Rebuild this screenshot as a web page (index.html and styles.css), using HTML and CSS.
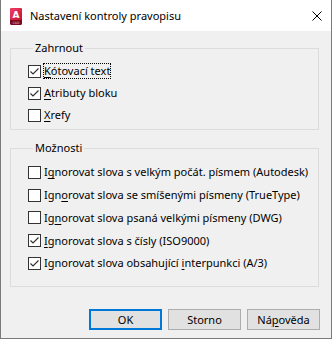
FILE: index.html
```html
<!DOCTYPE html>
<html lang="cs">
<head>
    <meta charset="UTF-8">
    <title>Nastavení kontroly pravopisu</title>
    <link rel="stylesheet" href="styles.css">
</head>
<body>
    <div class="window">
        <div class="titlebar">
            <svg class="app-icon" viewBox="0 0 12 17" width="12" height="17">
                <defs>
                    <linearGradient id="red" x1="0" y1="0" x2="1" y2="1">
                        <stop offset="0" stop-color="#f0406a"/>
                        <stop offset="1" stop-color="#c8102e"/>
                    </linearGradient>
                </defs>
                <rect x="0" y="0" width="12" height="17" rx="1.5" fill="#7a0b22"/>
                <rect x="0" y="0" width="12" height="12" rx="1.5" fill="url(#red)"/>
                <text x="6" y="9.5" text-anchor="middle" class="icon-a">A</text>
                <text x="6" y="15.6" text-anchor="middle" class="icon-cad">CAD</text>
            </svg>
            <span class="title">Nastavení kontroly pravopisu</span>
            <svg class="close" viewBox="0 0 10 10" width="10" height="10">
                <path d="M0.5 0.5 L9.5 9.5 M9.5 0.5 L0.5 9.5" stroke="#000" stroke-width="1" fill="none"/>
            </svg>
        </div>
        <div class="content">
            <fieldset class="group include">
                <legend>Zahrnout</legend>
                <label class="row">
                    <span class="box"><svg viewBox="0 0 11 11" width="11" height="11"><polyline points="1.5,5.5 4,8 9.5,2.5"/></svg></span>
                    <span class="text focused"><u>K</u>ótovací text</span>
                </label>
                <label class="row">
                    <span class="box"><svg viewBox="0 0 11 11" width="11" height="11"><polyline points="1.5,5.5 4,8 9.5,2.5"/></svg></span>
                    <span class="text"><u>A</u>tributy bloku</span>
                </label>
                <label class="row">
                    <span class="box"></span>
                    <span class="text"><u>X</u>refy</span>
                </label>
            </fieldset>
            <fieldset class="group options">
                <legend>Možnosti</legend>
                <label class="row">
                    <span class="box"></span>
                    <span class="text">I<u>g</u>norovat slova s velkým počát. písmem (Autodesk)</span>
                </label>
                <label class="row">
                    <span class="box"></span>
                    <span class="text">Ign<u>o</u>rovat slova se smíšenými písmeny (TrueType)</span>
                </label>
                <label class="row">
                    <span class="box"></span>
                    <span class="text">Ig<u>n</u>orovat slova psaná velkými písmeny (DWG)</span>
                </label>
                <label class="row">
                    <span class="box"><svg viewBox="0 0 11 11" width="11" height="11"><polyline points="1.5,5.5 4,8 9.5,2.5"/></svg></span>
                    <span class="text"><u>I</u>gnorovat slova s čísly (ISO9000)</span>
                </label>
                <label class="row">
                    <span class="box"><svg viewBox="0 0 11 11" width="11" height="11"><polyline points="1.5,5.5 4,8 9.5,2.5"/></svg></span>
                    <span class="text">Ignorovat slova obsahující <u>i</u>nterpunkci (A/3)</span>
                </label>
            </fieldset>
            <div class="buttons">
                <button class="btn default">OK</button>
                <button class="btn">Storno</button>
                <button class="btn">Ná<u>p</u>ověda</button>
            </div>
        </div>
    </div>
</body>
</html>
```

FILE: styles.css
```css
html, body {
    margin: 0;
    padding: 0;
}
body {
    font-family: "Noto Sans", "Liberation Sans", sans-serif;
    font-size: 11px;
    color: #000;
    background: #f0f0f0;
}
.window {
    width: 332px;
    height: 339px;
    box-sizing: border-box;
    border: 1px solid #7a7a7a;
    border-top: none;
    background: #f0f0f0;
    display: flex;
    flex-direction: column;
}
.titlebar {
    height: 31px;
    background: #fff;
    display: flex;
    align-items: center;
    padding: 0 9px 0 9px;
}
.app-icon {
    margin-top: 1px;
}
.icon-a {
    font-family: "DejaVu Sans", sans-serif;
    font-weight: bold;
    font-size: 9px;
    fill: #fff;
}
.icon-cad {
    font-family: "DejaVu Sans", sans-serif;
    font-size: 3px;
    fill: #f3c2cc;
}
.title {
    margin-left: 8px;
    flex: 1;
    font-size: 11px;
}
.content {
    flex: 1;
    padding: 0 12px 0 9px;
    display: flex;
    flex-direction: column;
}
.group {
    margin: 0;
    padding: 0 0 0 17px;
    border: 1px solid #dcdcdc;
    min-width: 0;
}
.group legend {
    padding: 0 2px;
    margin-left: 5px;
    line-height: 16px;
}
.include {
    margin-top: 9px;
    padding-top: 4px;
    padding-bottom: 3px;
}
.options {
    margin-top: 10px;
    padding-top: 5px;
    padding-bottom: 11px;
}
.row {
    display: flex;
    align-items: center;
    height: 22px;
}
.options .row {
    height: 22.75px;
}
.box {
    width: 13px;
    height: 13px;
    box-sizing: border-box;
    border: 1px solid #333;
    background: #fff;
    margin-right: 2px;
    flex: none;
}
.box svg {
    display: block;
}
.box polyline {
    fill: none;
    stroke: #333;
    stroke-width: 1.2;
}
.text {
    border: 1px solid transparent;
    line-height: 14px;
    white-space: nowrap;
}
.text.focused {
    border: 1px dotted #000;
}
u {
    text-underline-offset: 2px;
}
.buttons {
    display: flex;
    justify-content: flex-end;
    gap: 6px;
    margin-top: 22px;
    margin-right: -1px;
}
.btn {
    width: 73px;
    height: 21px;
    box-sizing: border-box;
    border: 1px solid #adadad;
    background: #e1e1e1;
    font-family: inherit;
    font-size: 11px;
    color: #000;
    padding: 0;
}
.btn.default {
    border: 2px solid #0078d7;
}
```
